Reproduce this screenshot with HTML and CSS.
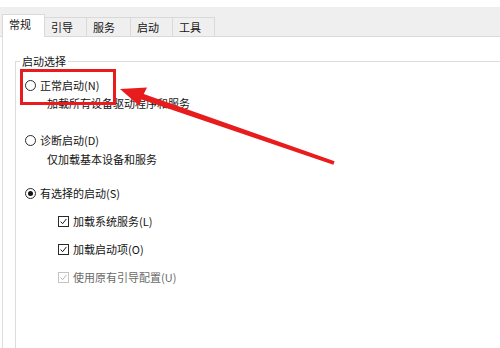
FILE: index.html
```html
<!DOCTYPE html>
<html lang="zh-CN">
<head>
    <meta charset="UTF-8">
    <meta name="viewport" content="width=device-width, initial-scale=1.0">
    <title>系统配置</title>
    <link rel="stylesheet" href="styles.css">
</head>
<body>
    <div class="tabbar">
        <div class="tab active">常规</div>
        <div class="tab">引导</div>
        <div class="tab">服务</div>
        <div class="tab">启动</div>
        <div class="tab">工具</div>
    </div>

    <div class="panel">
        <fieldset class="group">
            <legend>启动选择</legend>

            <div class="option radio-row r1">
                <span class="radio"></span>正常启动(N)
            </div>
            <div class="desc d1">加载所有设备驱动程序和服务</div>

            <div class="option radio-row r2">
                <span class="radio"></span>诊断启动(D)
            </div>
            <div class="desc d2">仅加载基本设备和服务</div>

            <div class="option radio-row r3">
                <span class="radio checked"></span>有选择的启动(S)
            </div>

            <div class="option check-row">
                <span class="check">
                    <svg viewBox="0 0 11 11"><path d="M2 5.6 L4.4 8.2 L9 2.4" /></svg>
                </span>加载系统服务(L)
            </div>
            <div class="option check-row">
                <span class="check">
                    <svg viewBox="0 0 11 11"><path d="M2 5.6 L4.4 8.2 L9 2.4" /></svg>
                </span>加载启动项(O)
            </div>
            <div class="option check-row disabled">
                <span class="check">
                    <svg viewBox="0 0 11 11"><path d="M2 5.6 L4.4 8.2 L9 2.4" /></svg>
                </span>使用原有引导配置(U)
            </div>
        </fieldset>
    </div>

    <!-- annotation drawn over the dialog -->
    <svg class="overlay" width="500" height="348" viewBox="0 0 500 348">
        <rect x="21.5" y="70.5" width="93" height="33" fill="none" stroke="#e81c1c" stroke-width="3" />
        <polygon fill="#e81c1c" points="120,89 147,87.5 142,97.5 139.5,106" />
        <polygon fill="#e81c1c" points="141.6,93.2 334.6,161.2 333.4,164.8 140.2,99" />
    </svg>
</body>
</html>
```

FILE: styles.css
```css
* {
    margin: 0;
    padding: 0;
    box-sizing: border-box;
}

html,
body {
    width: 500px;
    height: 348px;
    overflow: hidden;
}

body {
    position: relative;
    background-color: #ffffff;
    color: #141414;
    font-family: "Noto Sans CJK SC", "Microsoft YaHei", sans-serif;
    font-size: 11px;
}

.tabbar {
    display: flex;
    align-items: flex-end;
    height: 30px;
    margin-top: 7px;
    padding-left: 2px;
    background-color: #f0eff0;
    border-bottom: 1px solid #d9d9d9;
}

.tab {
    width: 42px;
    height: 19px;
    padding-left: 6px;
    line-height: 18px;
    border-top: 1px solid #d9d9d9;
    border-right: 1px solid #d9d9d9;
    background-color: #f0eff0;
}

.tab:nth-child(3) {
    width: 44px;
}

.tab.active {
    width: 43px;
    height: 23px;
    margin-bottom: -1px;
    line-height: 17px;
    padding-top: 1px;
    border-left: 1px solid #d9d9d9;
    background-color: #ffffff;
}

.panel {
    height: 311px;
    overflow: hidden;
    margin-left: 2px;
    border-left: 1px solid #dedede;
    padding: 17px 0 0 12px;
}

.group {
    height: 294px;
    border: 1px solid #dcdcdc;
    border-right: none;
    border-bottom: none;
    padding: 9px 0 0 4px;
}

.group legend {
    padding: 0 2px;
    line-height: 14px;
}

.option {
    display: flex;
    align-items: center;
    height: 16px;
    line-height: 16px;
}

.radio-row {
    margin-left: 5px;
}

.radio {
    display: flex;
    align-items: center;
    justify-content: center;
    width: 11px;
    height: 11px;
    margin-right: 4px;
    border: 1px solid #2a2a2a;
    border-radius: 50%;
    background-color: #ffffff;
}

.radio.checked::after {
    content: "";
    width: 5px;
    height: 5px;
    border-radius: 50%;
    background-color: #141414;
}

.desc {
    height: 16px;
    line-height: 16px;
    margin-left: 27px;
}

.d1 { margin-top: 2px; }
.r2 { margin-top: 21px; }
.d2 { margin-top: 3px; }
.r3 { margin-top: 18px; }

.check-row {
    margin-left: 38px;
    margin-top: 12px;
}

.check {
    width: 11px;
    height: 11px;
    margin-right: 4px;
    border: 1px solid #2a2a2a;
    background-color: #ffffff;
}

.check svg {
    display: block;
    width: 9px;
    height: 9px;
}

.check path {
    fill: none;
    stroke: #141414;
    stroke-width: 1.2;
}

.check-row.disabled {
    color: #6a6a6a;
}

.check-row.disabled .check {
    border-color: #c4c4c4;
}

.check-row.disabled .check path {
    stroke: #b4b4b4;
}

.overlay {
    position: absolute;
    top: 0;
    left: 0;
    pointer-events: none;
}
```
